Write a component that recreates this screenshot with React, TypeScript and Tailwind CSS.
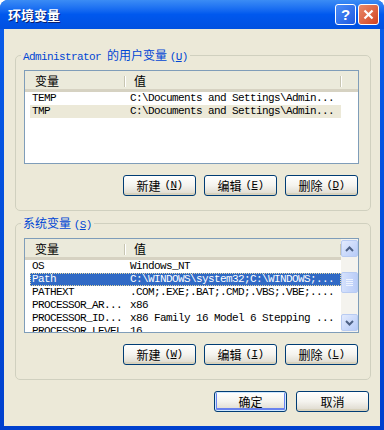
import React from 'react';

const cjk = "font-['Noto_Sans_CJK_SC','Noto_Sans',sans-serif]";
const mono = "font-['Liberation_Mono','DejaVu_Sans_Mono',monospace] text-[11px] tracking-[-0.6px]";

type Row = { name: string; value: string };

const userVars: Row[] = [
  { name: 'TEMP', value: 'C:\\Documents and Settings\\Admin...' },
  { name: 'TMP', value: 'C:\\Documents and Settings\\Admin...' },
];

const sysVars: Row[] = [
  { name: 'OS', value: 'Windows_NT' },
  { name: 'Path', value: 'C:\\WINDOWS\\system32;C:\\WINDOWS;...' },
  { name: 'PATHEXT', value: '.COM;.EXE;.BAT;.CMD;.VBS;.VBE;....' },
  { name: 'PROCESSOR_AR...', value: 'x86' },
  { name: 'PROCESSOR_ID...', value: 'x86 Family 16 Model 6 Stepping ...' },
  { name: 'PROCESSOR_LEVEL', value: '16' },
];

function Key({ k }: { k: string }) {
  return (
    <span className={mono}>
      (<span className="underline underline-offset-1">{k}</span>)
    </span>
  );
}

function XpButton({ label, k, isDefault }: { label: string; k?: string; isDefault?: boolean }) {
  return (
    <button
      className={`w-[73px] h-[21px] rounded-[3px] border border-[#003C74] bg-gradient-to-b from-[#FFFFFF] via-[#F4F3EE] to-[#DCD8CC] flex items-center justify-center gap-[4px] text-[12px] leading-none text-black ${cjk} ${
        isDefault ? 'shadow-[inset_0_0_0_1px_#CEE7FF,inset_0_-1px_0_2px_#6982EE]' : 'shadow-[inset_0_-2px_0_#D8D2BD]'
      }`}
    >
      <span>{label}</span>
      {k && <Key k={k} />}
    </button>
  );
}

function Header() {
  return (
    <div className={`h-[21px] pt-[2px] flex items-center bg-[#EBEADB] border-b-[3px] border-[#D6D2C2] text-[12px] ${cjk}`}>
      <div className="w-[99px] pl-[10px] flex items-center">变量</div>
      <div className="w-px h-[11px] bg-[#C7C5B2] shadow-[1px_0_0_#FFFFFF]" />
      <div className="w-[215px] pl-[9px]">值</div>
      <div className="w-px h-[11px] bg-[#C7C5B2] shadow-[1px_0_0_#FFFFFF]" />
    </div>
  );
}

function RowLine({ row, state }: { row: Row; state?: 'inactive' | 'active' }) {
  const bg =
    state === 'active'
      ? 'bg-[#316AC5] text-white outline outline-1 outline-dotted outline-offset-[-1px] outline-[#E8D9A0]'
      : state === 'inactive'
        ? 'bg-[#ECE9D8] text-black'
        : 'text-black';
  return (
    <div className="h-[13px] flex pl-[5px]">
      <div className={`flex w-[311px] h-[13px] items-center ${bg} ${mono} leading-none whitespace-nowrap`}>
        <div className="w-[94px] pl-[2px] overflow-hidden">{row.name}</div>
        <div className="pl-[6px]">{row.value}</div>
      </div>
    </div>
  );
}

function ScrollBar() {
  return (
    <div className="w-[17px] flex flex-col bg-[#F4F3EE] py-px">
      <div className="h-[17px] rounded-[2px] border border-[#B8CBF2] bg-gradient-to-br from-[#E3EBFD] to-[#B6CBF8] flex items-center justify-center">
        <svg width="9" height="6" viewBox="0 0 9 6"><path d="M1 5 L4.5 1.5 L8 5" stroke="#4D6185" strokeWidth="2" fill="none" /></svg>
      </div>
      <div className="flex-1 flex flex-col pt-[15px] pb-[21px]">
        <div className="h-[21px] rounded-[2px] border border-[#B8CBF2] bg-gradient-to-r from-[#D5E1FC] to-[#BACDF8] flex flex-col items-center justify-center gap-px">
          <div className="w-[7px] h-px bg-[#EEF3FE]" />
          <div className="w-[7px] h-px bg-[#EEF3FE]" />
          <div className="w-[7px] h-px bg-[#EEF3FE]" />
          <div className="w-[7px] h-px bg-[#EEF3FE]" />
        </div>
      </div>
      <div className="h-[17px] rounded-[2px] border border-[#B8CBF2] bg-gradient-to-br from-[#E3EBFD] to-[#B6CBF8] flex items-center justify-center">
        <svg width="9" height="6" viewBox="0 0 9 6"><path d="M1 1 L4.5 4.5 L8 1" stroke="#4D6185" strokeWidth="2" fill="none" /></svg>
      </div>
    </div>
  );
}

function Group({
  legend,
  rows,
  selected,
  selState,
  keys,
  listH,
  scroll,
}: {
  legend: React.ReactNode;
  rows: Row[];
  selected: number;
  selState: 'inactive' | 'active';
  keys: [string, string, string];
  listH: string;
  scroll?: boolean;
}) {
  return (
    <fieldset className="border border-[#D0D0BF] rounded-[5px] pl-[8px] pr-[11px] pt-[8px] pb-[14px]">
      <legend className={`ml-[-3px] px-[2px] h-[14px] text-[12px] leading-[14px] text-[#0046D5] ${cjk}`}>{legend}</legend>
      <div className={`${listH} border border-[#7F9DB9] bg-white flex overflow-hidden`}>
        <div className="flex-1 flex flex-col overflow-hidden">
          <Header />
          <div>
            {rows.map((r, i) => (
              <RowLine key={r.name} row={r} state={i === selected ? selState : undefined} />
            ))}
          </div>
        </div>
        {scroll && <ScrollBar />}
      </div>
      <div className="flex justify-end gap-[8px] mt-[11px] pr-px">
        <XpButton label="新建" k={keys[0]} />
        <XpButton label="编辑" k={keys[1]} />
        <XpButton label="删除" k={keys[2]} />
      </div>
    </fieldset>
  );
}

export default function App() {
  return (
    <div className="w-[384px] h-[430px] flex flex-col rounded-t-[8px] overflow-hidden bg-gradient-to-b from-[#0A5DEA] to-[#0040CE]">
      {/* title bar */}
      <div className="h-[29px] flex items-center pl-[8px] pr-[5px] bg-gradient-to-b from-[#3B8CF5] via-[#0058EE] to-[#0050E0]">
        <span className={`text-white font-bold text-[13px] [text-shadow:1px_1px_0_#0A1E6E] ${cjk}`}>环境变量</span>
        <div className="ml-auto flex gap-[2px]">
          <div className="w-[21px] h-[21px] rounded-[3px] border border-white bg-gradient-to-br from-[#4C8DF8] to-[#1F59E0] flex items-center justify-center text-white font-bold text-[15px] leading-none font-['Liberation_Sans',sans-serif]">
            ?
          </div>
          <div className="w-[21px] h-[21px] rounded-[3px] border border-white bg-gradient-to-br from-[#E98A6B] to-[#D1401C] flex items-center justify-center">
            <svg width="11" height="11" viewBox="0 0 11 11"><path d="M1.5 1.5 L9.5 9.5 M9.5 1.5 L1.5 9.5" stroke="white" strokeWidth="2.2" /></svg>
          </div>
        </div>
      </div>

      {/* body */}
      <div className="flex-1 mx-[4px] mb-[4px] bg-[#ECE9D8] flex flex-col pl-[11px] pr-[9px] pt-[19px]">
        <Group
          legend={
            <>
              <span className={mono}>Administrator </span>的用户变量 <Key k="U" />
            </>
          }
          rows={userVars}
          selected={1}
          selState="inactive"
          keys={['N', 'E', 'D']}
          listH="h-[94px]"
        />
        <div className="h-[5px]" />
        <Group
          legend={
            <>
              系统变量 <Key k="S" />
            </>
          }
          rows={sysVars}
          selected={1}
          selState="active"
          keys={['W', 'I', 'L']}
          listH="h-[95px]"
          scroll
        />
        <div className="flex justify-end gap-[9px] mt-[11px] pr-[2px]">
          <XpButton label="确定" isDefault />
          <XpButton label="取消" />
        </div>
      </div>
    </div>
  );
}
